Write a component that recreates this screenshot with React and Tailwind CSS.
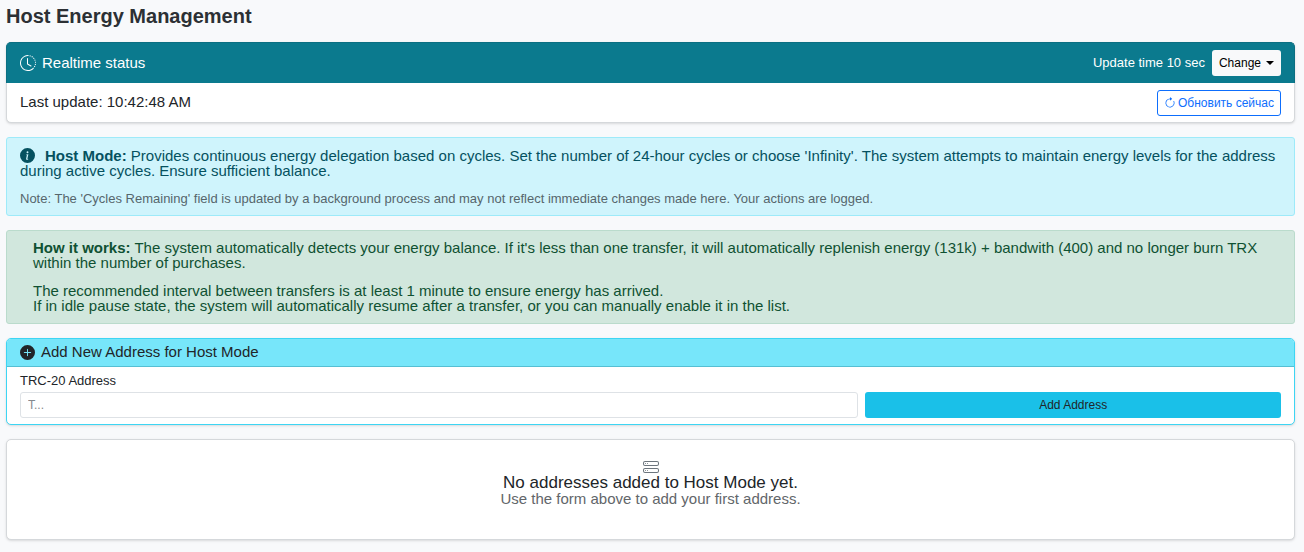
import React, { useState } from "react";
import {
  BsArrowClockwise,
  BsClockHistory,
  BsHddStack,
  BsInfoCircleFill,
  BsPlusCircleFill,
} from "react-icons/bs";

function StatusCard() {
  const [updated, setUpdated] = useState("10:42:48 AM");
  return (
    <section className="rounded-[5px] border border-[#d5d8db] bg-white shadow-sm">
      <header className="-mx-px -mt-px flex h-[41px] items-center justify-between rounded-t-[5px] border border-b-0 border-[#0b6f82] bg-[#0b7a8e] px-[13px] text-white">
        <h2 className="flex items-center gap-[6px] text-[15px]">
          <BsClockHistory className="size-4" />
          Realtime status
        </h2>
        <div className="flex items-center gap-[7px]">
          <span className="text-[13px]">Update time 10 sec</span>
          <button type="button" className="flex h-[26px] items-center gap-[5px] rounded-[3px] bg-[#f8f9fa] px-[7px] text-[12px] text-black">
            Change
            <span className="border-x-4 border-t-4 border-x-transparent border-t-black"></span>
          </button>
        </div>
      </header>
      <div className="flex h-[39px] items-center justify-between px-[13px]">
        <p className="text-[15px]">Last update: {updated}</p>
        <button
          type="button"
          onClick={() => setUpdated(new Date().toLocaleTimeString("en-US"))}
          className="flex h-[26px] items-center gap-[2px] rounded-[3px] border border-[#0d6efd] px-[6px] text-[12px] text-[#0d6efd]"
        >
          <BsArrowClockwise className="size-3" />
          Обновить сейчас
        </button>
      </div>
    </section>
  );
}

function HostModeInfo() {
  return (
    <section className="rounded-[3px] border border-[#9eeaf9] bg-[#cff4fc] px-[13px] pt-[10px] pb-[9px] text-[#055160]">
      <p className="text-[15px] leading-[15px]">
        <BsInfoCircleFill className="mr-[10px] inline size-[15px] align-[-2px]" />
        <strong>Host Mode:</strong> Provides continuous energy delegation based on cycles. Set the number of 24-hour cycles or choose 'Infinity'. The system attempts to maintain energy levels for the address during active cycles. Ensure sufficient balance.
      </p>
      <p className="mt-[13px] text-[13px] leading-[15px] text-[#56666c]">
        Note: The 'Cycles Remaining' field is updated by a background process and may not reflect immediate changes made here. Your actions are logged.
      </p>
    </section>
  );
}

function HowItWorks() {
  return (
    <section className="rounded-[3px] border border-[#badbcc] bg-[#d1e7dd] px-[26px] pt-[9px] pb-[10px] text-[15px] leading-[15px] text-[#0f5132]">
      <p>
        <strong>How it works:</strong> The system automatically detects your energy balance. If it's less than one transfer, it will automatically replenish energy (131k) + bandwith (400) and no longer burn TRX within the number of purchases.
      </p>
      <p className="mt-[13px]">
        The recommended interval between transfers is at least 1 minute to ensure energy has arrived.
        <br />
        If in idle pause state, the system will automatically resume after a transfer, or you can manually enable it in the list.
      </p>
    </section>
  );
}

function AddAddress() {
  const [address, setAddress] = useState("");
  return (
    <section className="rounded-[5px] border border-[#3dd5f3] bg-white shadow-sm">
      <h2 className="flex h-7 items-center gap-[6px] rounded-t-[4px] border-b border-[#55bfd3] bg-[#77e6fa] px-[13px] text-[15px]">
        <BsPlusCircleFill className="size-[15px]" />
        Add New Address for Host Mode
      </h2>
      <form onSubmit={e => e.preventDefault()} className="px-[13px] py-[6px]">
        <label htmlFor="address" className="block text-[13px] leading-4">TRC-20 Address</label>
        <div className="mt-[3px] grid grid-cols-3 gap-[7px]">
          <input
            id="address"
            type="text"
            value={address}
            onChange={e => setAddress(e.target.value)}
            placeholder="T..."
            className="col-span-2 h-[26px] rounded-[3px] border border-[#dee2e6] bg-white px-[7px] text-[12px] placeholder:text-[#85898d]"
          />
          <button type="submit" className="h-[26px] rounded-[3px] bg-[#1ac0e8] text-[12px]">Add Address</button>
        </div>
      </form>
    </section>
  );
}

function EmptyList() {
  return (
    <section className="flex flex-col items-center rounded-[5px] border border-[#d5d8db] bg-white pt-[19px] pb-[33px] shadow-sm">
      <BsHddStack className="size-4 text-[#6c757d]" />
      <h2 className="text-[17px] leading-4">No addresses added to Host Mode yet.</h2>
      <p className="text-[15px] leading-[15px] text-[#62666a]">Use the form above to add your first address.</p>
    </section>
  );
}

export default function App() {
  return (
    <main className="min-h-screen bg-[#f8f9fb] pt-1 pr-[9px] pb-3 pl-[6px] font-['Liberation_Sans',Arial,sans-serif] text-[#212529]">
      <h1 className="mb-[14px] text-[20px] leading-6 font-bold text-[#2c3034]">Host Energy Management</h1>
      <div className="flex flex-col gap-[14px]">
        <StatusCard />
        <HostModeInfo />
        <HowItWorks />
        <AddAddress />
        <EmptyList />
      </div>
    </main>
  );
}
